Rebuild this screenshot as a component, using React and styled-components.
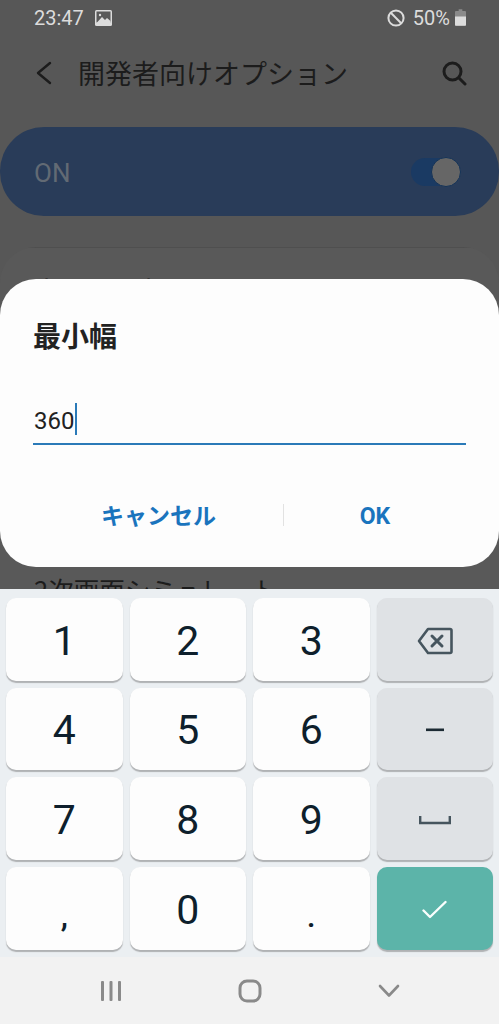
import React from 'react';
import styled, { createGlobalStyle } from 'styled-components';

const Global = createGlobalStyle`
  html, body { margin: 0; padding: 0; background: #595959; }
  * { box-sizing: border-box; }
`;

const JP = `"Noto Sans CJK JP", sans-serif`;
const MIXED = `Roboto, "Noto Sans CJK JP", sans-serif`;

const Screen = styled.div`
  position: relative;
  width: 499px;
  height: 1024px;
  overflow: hidden;
  display: flex;
  flex-direction: column;
  font-family: ${JP};
`;

const Behind = styled.div`
  flex: none;
  height: 589px;
  background: #575757;
  overflow: hidden;
  display: flex;
  flex-direction: column;
`;

const StatusBar = styled.div`
  flex: none;
  height: 35px;
  padding: 0 33px 0 34px;
  display: flex;
  align-items: center;
  color: #dcdcdc;
  font-family: Roboto, sans-serif;
  font-size: 20px;
`;

const StatusTime = styled.span`
  margin-right: 11px;
`;

const StatusSpacer = styled.div`
  flex: 1;
`;

const StatusPct = styled.span`
  margin: 0 5px 0 8px;
`;

const TitleBar = styled.div`
  flex: none;
  height: 92px;
  padding: 0 32px 17px 34px;
  display: flex;
  align-items: center;
`;

const Title = styled.div`
  flex: 1;
  margin-left: 26px;
  font-size: 27px;
  line-height: 36px;
  color: #1c1c1c;
  white-space: nowrap;
`;

const MasterBar = styled.div`
  flex: none;
  height: 89px;
  border-radius: 44px;
  background: #293c59;
  padding: 2px 39px 0 34px;
  display: flex;
  align-items: center;
  justify-content: space-between;
`;

const MasterLabel = styled.span`
  font-family: Roboto, sans-serif;
  font-size: 26px;
  color: #626a74;
`;

const SwitchTrack = styled.div`
  position: relative;
  width: 49px;
  height: 28px;
  margin-top: -2px;
  border-radius: 14px;
  background: #1a3a63;
`;

const SwitchThumb = styled.div`
  position: absolute;
  right: -1px;
  top: -1px;
  width: 30px;
  height: 30px;
  border-radius: 50%;
  background: #666666;
  border: 1.5px solid #143358;
`;

const Card = styled.div`
  flex: 1;
  min-height: 0;
  overflow: hidden;
  margin-top: 31px;
  border-radius: 36px 36px 0 0;
  background: #595959;
  padding: 0 28px;
  color: #1c1c1c;
`;

const CardRule = styled.div`
  height: 1px;
  background: #4f4f4f;
  margin-bottom: ${p => p.$gap}px;
`;

const CardRow = styled.div`
  padding-left: 6px;
  font-size: 25.5px;
  line-height: 36px;
  margin-bottom: ${p => p.$gap}px;
  white-space: nowrap;
`;

const Dialog = styled.div`
  position: absolute;
  top: 279px;
  left: 0;
  width: 499px;
  height: 288px;
  border-radius: 36px;
  background: #fdfdfd;
  padding: 36px 33px 0;
  display: flex;
  flex-direction: column;
`;

const DialogTitle = styled.div`
  font-size: 28px;
  line-height: 40px;
  font-weight: 700;
  color: #222;
`;

const Field = styled.div`
  margin-top: 46px;
  height: 44px;
  border-bottom: 2px solid #2a7ab8;
  display: flex;
  align-items: center;
  font-family: Roboto, sans-serif;
  font-size: 24px;
  color: #222;
  padding: 2px 0 8px 1px;
`;

const FieldValue = styled.span`
  padding-top: 3px;
`;

const Caret = styled.span`
  width: 2px;
  height: 32px;
  background: #2a7ab8;
  margin-left: 1px;
`;

const Actions = styled.div`
  margin: 47px -33px 0;
  display: grid;
  grid-template-columns: 283px 1px 215px;
  align-items: center;
  height: 46px;
`;

const ActionButton = styled.div`
  text-align: center;
  font-family: ${MIXED};
  font-size: 23px;
  line-height: 32px;
  font-weight: 700;
  color: #1a74bd;
  padding: 3px ${p => p.$right}px 0 ${p => p.$left}px;
`;

const ActionDivider = styled.div`
  height: 22px;
  background: #e2e2e2;
`;

const Keyboard = styled.div`
  flex: none;
  height: 368px;
  background: #ebeff2;
  padding: 9px 6px 0;
  display: grid;
  grid-template-columns: repeat(4, 1fr);
  grid-auto-rows: 82.5px;
  column-gap: 7px;
  row-gap: 7.2px;
`;

const Key = styled.div`
  border-radius: 10px;
  background: ${p => p.$bg || '#fdfdfd'};
  box-shadow: 0 1.5px 1px #b0b2b4;
  display: flex;
  align-items: center;
  justify-content: center;
  color: #0e1f2c;
  font-family: Roboto, sans-serif;
  font-size: 41px;
  padding-top: 3px;
`;

const Mark = styled.span`
  font-size: 32px;
  font-weight: 500;
  transform: translateY(${p => p.$y}px);
`;

const NavBar = styled.div`
  flex: none;
  height: 67px;
  background: #f2f2f2;
  display: grid;
  grid-template-columns: 222px 56px 221px;
  align-items: center;
  justify-items: center;
`;

const iconCommon = { fill: 'none', strokeLinecap: 'round', strokeLinejoin: 'round' };

const Back = () => (
  <svg width="18" height="24" viewBox="0 0 18 24" {...iconCommon} stroke="#1c1c1c" strokeWidth="2.4">
    <path d="M16 2 L4 12 L16 22" />
  </svg>
);
const Search = () => (
  <svg width="26" height="26" viewBox="0 0 26 26" {...iconCommon} stroke="#1c1c1c" strokeWidth="3">
    <circle cx="11.5" cy="11.5" r="8.5" />
    <path d="M18 18 L24 24" />
  </svg>
);
const Picture = () => (
  <svg width="17" height="16" viewBox="0 0 17 16">
    <rect x="0" y="0" width="17" height="16" rx="1.5" fill="#dcdcdc" />
    <rect x="1.5" y="1.5" width="14" height="11" fill="#595959" />
    <path d="M1.5 13 L7 7 L10 10 L12 8 L15.5 11 V14 H1.5 Z" fill="#dcdcdc" />
    <circle cx="5" cy="5" r="1.2" fill="#dcdcdc" />
  </svg>
);
const Blocked = () => (
  <svg width="18" height="18" viewBox="0 0 18 18" fill="none" stroke="#dcdcdc" strokeWidth="2">
    <circle cx="9" cy="9" r="7.6" />
    <path d="M3.8 3.8 L14.2 14.2" />
  </svg>
);
const Battery = () => (
  <svg width="11" height="17" viewBox="0 0 12 18">
    <path d="M4 0 H8 V2 H11 a1 1 0 0 1 1 1 V17 a1 1 0 0 1-1 1 H1 a1 1 0 0 1-1-1 V3 a1 1 0 0 1 1-1 H4 Z" fill="#8a8a8a" />
    <path d="M0 8 H12 V17 a1 1 0 0 1-1 1 H1 a1 1 0 0 1-1-1 Z" fill="#dcdcdc" />
  </svg>
);
const Backspace = () => (
  <svg width="36" height="28" viewBox="0 0 36 28" {...iconCommon} stroke="#46555e" strokeWidth="2.6">
    <path d="M11 2 H33 a1.5 1.5 0 0 1 1.5 1.5 V24.5 a1.5 1.5 0 0 1-1.5 1.5 H11 L2 14 Z" />
    <path d="M15 9 L25 19 M25 9 L15 19" strokeWidth="3" />
  </svg>
);
const Minus = () => (
  <svg width="18" height="4" viewBox="0 0 18 4"><rect width="18" height="2.6" y="0.5" fill="#1c2a33" /></svg>
);
const SpaceBar = () => (
  <svg width="32" height="10" viewBox="0 0 32 10" fill="none" stroke="#46555e" strokeWidth="2.4">
    <path d="M1.2 1 V8 H30.8 V1" />
  </svg>
);
const Check = () => (
  <svg width="26" height="20" viewBox="0 0 26 20" {...iconCommon} stroke="#fafefd" strokeWidth="2.4">
    <path d="M1.5 10.5 L8 17 L23.5 2" />
  </svg>
);
const NavLines = () => (
  <svg width="22" height="22" viewBox="0 0 22 22" fill="#8a8a8a">
    <rect x="1" y="1" width="3" height="20" rx="1" />
    <rect x="9.5" y="1" width="3" height="20" rx="1" />
    <rect x="18" y="1" width="3" height="20" rx="1" />
  </svg>
);
const NavHome = () => (
  <svg width="24" height="24" viewBox="0 0 24 24" fill="none" stroke="#8a8a8a" strokeWidth="3">
    <rect x="2" y="2" width="20" height="20" rx="7" />
  </svg>
);
const NavDown = () => (
  <svg width="24" height="16" viewBox="0 0 24 16" {...iconCommon} stroke="#8a8a8a" strokeWidth="2.6">
    <path d="M3 3 L12 12.5 L21 3" />
  </svg>
);

export default function App() {
  return (
    <Screen>
      <Global />
      <Behind>
        <StatusBar>
          <StatusTime>23:47</StatusTime>
          <Picture />
          <StatusSpacer />
          <Blocked />
          <StatusPct>50%</StatusPct>
          <Battery />
        </StatusBar>
        <TitleBar>
          <Back />
          <Title>開発者向けオプション</Title>
          <Search />
        </TitleBar>
        <MasterBar>
          <MasterLabel>ON</MasterLabel>
          <SwitchTrack><SwitchThumb /></SwitchTrack>
        </MasterBar>
        <Card>
          <CardRule $gap={22} />
          <CardRow $gap={265}>ウィンドウアニメスケール</CardRow>
          <CardRow $gap={0}>2次画面シミュレート</CardRow>
        </Card>
      </Behind>
      <Keyboard>
        <Key>1</Key><Key>2</Key><Key>3</Key><Key $bg="#dfe2e5"><Backspace /></Key>
        <Key>4</Key><Key>5</Key><Key>6</Key><Key $bg="#dfe2e5"><Minus /></Key>
        <Key>7</Key><Key>8</Key><Key>9</Key><Key $bg="#dfe2e5"><SpaceBar /></Key>
        <Key><Mark $y={6}>,</Mark></Key><Key>0</Key><Key><Mark $y={6}>.</Mark></Key><Key $bg="#5cb4a9"><Check /></Key>
      </Keyboard>
      <NavBar>
        <NavLines />
        <NavHome />
        <NavDown />
      </NavBar>
      <Dialog>
        <DialogTitle>最小幅</DialogTitle>
        <Field><FieldValue>360</FieldValue><Caret /></Field>
        <Actions>
          <ActionButton $left={34} $right={0}>キャンセル</ActionButton>
          <ActionDivider />
          <ActionButton $left={0} $right={33}>OK</ActionButton>
        </Actions>
      </Dialog>
    </Screen>
  );
}
